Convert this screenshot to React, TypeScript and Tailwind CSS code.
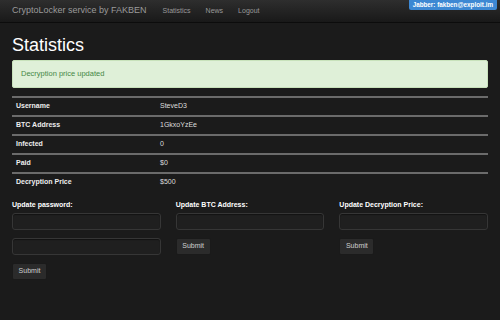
import React from 'react';

const rows = [
  ['Username', 'SteveD3'],
  ['BTC Address', '1GkxoYzEe'],
  ['Infected', '0'],
  ['Paid', '$0'],
  ['Decryption Price', '$500'],
];

const Field = () => (
  <div className="h-[17px] w-full rounded-[3px] border border-[#363636] bg-[#1f1f1f] shadow-[inset_0_1px_1px_rgba(0,0,0,0.4)]" />
);

const SubmitButton = () => (
  <button className="flex h-[17px] w-[35px] items-center justify-center rounded-[2px] border border-[#1a1a1a] bg-[#2b2b2b] text-[7px] text-[#d0d0d0]">
    Submit
  </button>
);

export default function App() {
  return (
    <div className="h-[320px] w-[500px] overflow-hidden bg-[#1b1b1b] font-['Liberation_Sans',Arial,sans-serif]">
      <div className="relative flex h-[23px] items-center border-b border-[#0c0c0c] bg-gradient-to-b from-[#2e2e2e] to-[#191919] px-3">
        <div className="text-[9px] text-[#9a9a9a]">CryptoLocker service by FAKBEN</div>
        <div className="ml-[16px] flex gap-[15px] text-[7px] text-[#999]">
          <span>Statistics</span>
          <span>News</span>
          <span>Logout</span>
        </div>
        <div className="absolute right-[3px] top-0 flex h-[10px] items-center rounded-b-[2px] bg-[#3d88d3] px-[4px] text-[6.3px] font-bold text-white">
          Jabber: fakben@exploit.im
        </div>
      </div>

      <div className="px-3">
        <h1 className="mt-[10px] text-[18px] leading-[24px] text-white">Statistics</h1>
        <div className="mt-[3px] flex h-[28px] items-center rounded-[2px] border border-[#c8e2bb] bg-[#dff0d8] px-[8px] text-[7.5px] text-[#468847]">
          Decryption price updated
        </div>

        <div className="mt-[8px]">
          {rows.map(([label, value]) => (
            <div key={label} className="flex h-[19px] items-center border-t-2 border-[#6b6b6b] text-[7px]">
              <div className="w-[148px] pl-[4px] font-bold text-[#eee]">{label}</div>
              <div className="text-[#ddd]">{value}</div>
            </div>
          ))}
        </div>

        <div className="mt-[9px] grid grid-cols-3 gap-x-[15px]">
          <div className="flex flex-col">
            <div className="mb-[3px] h-[10px] text-[7px] leading-[10px] font-bold text-white">Update password:</div>
            <Field />
            <div className="mt-[8px]">
              <Field />
            </div>
            <div className="mt-[8px]">
              <SubmitButton />
            </div>
          </div>
          <div className="flex flex-col">
            <div className="mb-[3px] h-[10px] text-[7px] leading-[10px] font-bold text-white">Update BTC Address:</div>
            <Field />
            <div className="mt-[8px]">
              <SubmitButton />
            </div>
          </div>
          <div className="flex flex-col">
            <div className="mb-[3px] h-[10px] text-[7px] leading-[10px] font-bold text-white">Update Decryption Price:</div>
            <Field />
            <div className="mt-[8px]">
              <SubmitButton />
            </div>
          </div>
        </div>
      </div>
    </div>
  );
}
